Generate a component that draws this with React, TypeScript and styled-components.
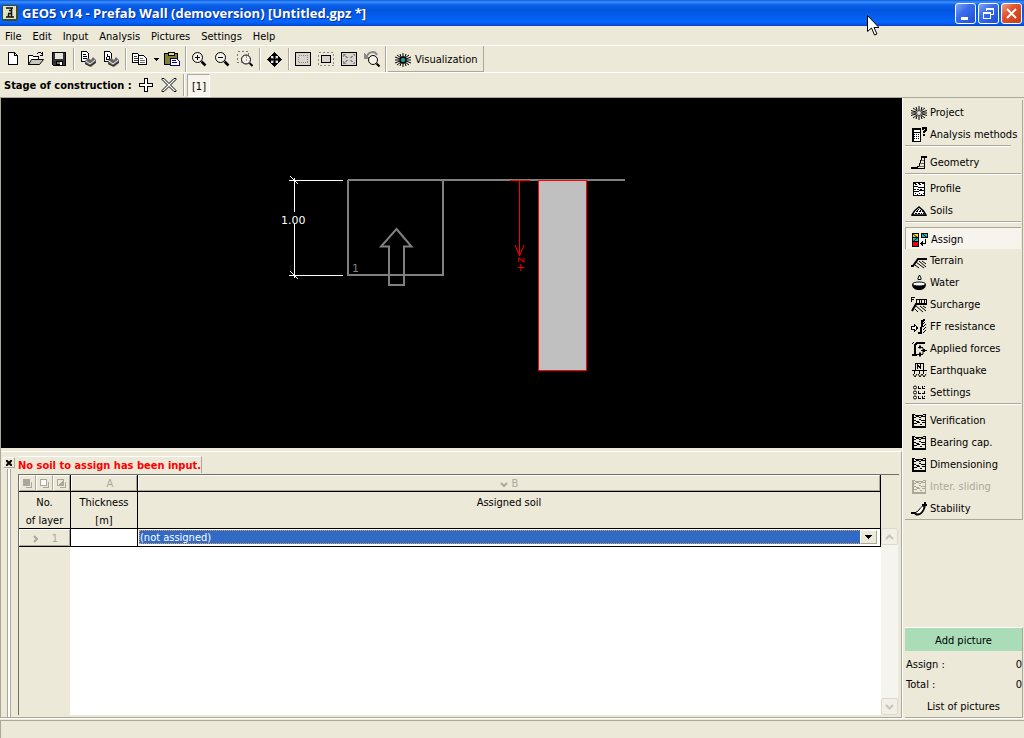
import React from "react";
import styled, { createGlobalStyle, css } from "styled-components";

const c = {
  face: "#ece9d8",
  light: "#ffffff",
  shade: "#aca899",
  dark: "#716f64",
  pressed: "#f6f4ec",
  disabled: "#aca899",
  select: "#316ac5",
};

const Global = createGlobalStyle`
  *, *::before, *::after { box-sizing: border-box; }
  body { margin: 0; background: ${c.face}; }
  body, button, input, select, table {
    font: 11px/16px "DejaVu Sans Condensed", "DejaVu Sans", sans-serif;
    color: #000;
  }
  button, input, select { margin: 0; padding: 0; border: 0; background: transparent; border-radius: 0; }
  svg { display: block; flex: none; }
`;

/* ---------- frame ---------- */

const Window = styled.div`
  min-height: 100vh;
  display: flex;
  flex-direction: column;
`;

const TitleBar = styled.header`
  position: relative;
  height: 26px;
  padding: 0 2px;
  display: flex;
  align-items: center;
  background: linear-gradient(#0a5be0 0, #3c90ff 2px, #0b5fe8 5px, #0355e0 10px, #0460f2 18px, #0666ff 22px, #0350d8 25px, #0340c0 26px);
`;

const Title = styled.h1`
  flex: 1;
  margin: 0 0 0 4px;
  font: bold 13px/24px "Open Sans", sans-serif;
  color: #fff;
  text-shadow: 1px 1px #0b2f8a;
  white-space: nowrap;
`;

const WindowButtons = styled.div`
  display: flex;
  gap: 2px;
`;

const WindowButton = styled.button<{ $close?: boolean }>`
  width: 21px;
  height: 21px;
  display: grid;
  place-items: center;
  border: 1px solid #fff;
  border-radius: 3px;
  background: ${(p) =>
    p.$close
      ? "linear-gradient(135deg, #f0a08a, #e0502c 40%, #c83c14)"
      : "linear-gradient(135deg, #7ea6f4, #3a6cec 40%, #1c4fd8)"};
`;

const Pointer = styled.svg`
  position: absolute;
  left: 85%;
  margin-left: -3px;
  top: 15px;
  z-index: 2;
`;

const MenuBar = styled.nav`
  height: 20px;
  display: flex;
  align-items: center;
  padding: 2px 0 0 5px;
  gap: 11px;
  border-bottom: 1px solid ${c.light};
`;

const MenuItem = styled.button`
  height: 18px;
`;

const Bar = styled.div`
  display: flex;
  align-items: center;
  border-bottom: 1px solid ${c.light};
`;

const ToolBar = styled(Bar)`
  height: 27px;
  padding-left: 2px;
`;

const StageBar = styled(Bar)`
  height: 25px;
  padding-left: 4px;
  border-bottom-color: ${c.shade};
`;

const ToolButton = styled.button<{ $slim?: boolean }>`
  width: ${(p) => (p.$slim ? 9 : 23)}px;
  height: 24px;
  padding-right: 1px;
  display: grid;
  place-items: center;
`;

const Divider = styled.span<{ $tight?: boolean }>`
  width: 2px;
  height: ${(p) => (p.$tight ? 26 : 22)}px;
  margin: 0 ${(p) => (p.$tight ? 1 : 2)}px;
  border-left: 1px solid ${c.shade};
  border-right: 1px solid ${c.light};
`;

const VisualButton = styled.button`
  display: flex;
  align-items: center;
  gap: 4px;
  height: 26px;
  padding: 2px 6px 0 7px;
  border-right: 1px solid ${c.shade};
  border-bottom: 1px solid ${c.shade};
`;

const StageLabel = styled.span`
  width: 131px;
  padding-top: 1px;
  font-weight: bold;
  white-space: nowrap;
`;

const StageTab = styled.button`
  width: 23px;
  height: 23px;
  padding: 4px 0 0 1px;
  background: ${c.pressed};
  border: 1px solid ${c.light};
  border-left-color: ${c.shade};
  border-top-color: ${c.shade};
`;

const Body = styled.div`
  flex: 1;
  display: grid;
  grid-template-columns: 1fr 122px;
`;

const Work = styled.main`
  display: flex;
  flex-direction: column;
  min-width: 0;
  border-left: 1px solid ${c.shade};
`;

const Canvas = styled.section`
  background: #000;
  svg { width: 100%; height: 350px; }
  text { font-family: "DejaVu Sans", sans-serif; }
`;

/* ---------- input pane ---------- */

const Pane = styled.section`
  flex: 1;
  display: flex;
  margin-top: 3px;
  padding-top: 4px;
  border-top: 1px solid ${c.light};
  border-right: 1px solid ${c.shade};
  border-bottom: 1px solid ${c.shade};
`;

const Grip = styled.div`
  width: 17px;
  display: flex;
  flex-direction: column;
  align-items: center;
  gap: 1px;
  padding: 1px 1px 0 0;
`;

const PaneClose = styled.button`
  width: 12px;
  height: 11px;
  display: grid;
  place-items: center;
  border: 1px solid;
  border-color: ${c.light} ${c.shade} ${c.shade} ${c.light};
`;

const GripLines = styled.span`
  flex: 1;
  width: 4px;
  border-left: 1px solid ${c.shade};
  border-right: 1px solid ${c.shade};
  background: ${c.light};
`;

const PaneMain = styled.div`
  flex: 1;
  min-width: 0;
  display: flex;
  flex-direction: column;
  padding: 0 2px 2px 0;
`;

const Warning = styled.p`
  align-self: flex-start;
  height: 17px;
  margin: 0 0 1px;
  font-weight: bold;
  line-height: 18px;
  color: #f00;
  border-top: 1px solid ${c.light};
  border-right: 1px solid ${c.shade};
`;

const Sheet = styled.div`
  flex: 1;
  display: grid;
  grid-template-columns: 1fr 18px;
  border-top: 1px solid ${c.dark};
  border-left: 1px solid ${c.dark};
`;

const SheetBody = styled.div`
  display: flex;
  flex-direction: column;
`;

const Table = styled.table`
  width: 100%;
  table-layout: fixed;
  border-collapse: separate;
  border-spacing: 0;
  th, td {
    padding: 0;
    font-weight: normal;
    text-align: center;
    border-right: 1px solid #000;
    border-bottom: 1px solid #000;
  }
  td { background: #fff; }
`;

const raised = css`
  border: 1px solid;
  border-color: ${c.light} ${c.shade} ${c.shade} ${c.light};
`;

const ColumnHead = styled.button<{ $plain?: boolean }>`
  ${raised}
  width: 100%;
  height: 16px;
  display: flex;
  align-items: center;
  justify-content: center;
  gap: 4px;
  padding-top: 2px;
  padding-left: ${(p) => (p.$plain ? 12 : 0)}px;
  color: ${c.disabled};
`;

const CornerTools = styled.div`
  display: flex;
  height: 16px;
`;

const CornerButton = styled.button`
  ${raised}
  flex: 1;
  display: grid;
  place-items: center;
`;

const Caption = styled.div`
  height: 36px;
  line-height: 18px;
  padding-top: 2px;
`;

const RowHead = styled(ColumnHead)`
  height: 17px;
  justify-content: flex-end;
  gap: 14px;
  padding-right: 11px;
`;

const CellInput = styled.input`
  display: block;
  width: 100%;
  height: 17px;
`;

const SelectWrap = styled.div`
  display: flex;
  height: 17px;
  padding: 1px 3px 2px 1px;
  position: relative;
`;

const SoilSelect = styled.select`
  appearance: none;
  flex: 1;
  padding: 1px 0 0 1px;
  line-height: 14px;
  color: #fff;
  background: ${c.select};
  outline: 1px dotted #e0a050;
  outline-offset: -1px;
`;

const DropArrow = styled.span`
  position: absolute;
  right: 3px;
  top: 1px;
  width: 17px;
  height: 14px;
  display: grid;
  place-items: center;
  pointer-events: none;
  background: ${c.face};
  ${raised}
`;

const Blank = styled.div`
  flex: 1;
  border-left: 51px solid ${c.face};
  background: #fff;
`;

const ScrollBar = styled.div`
  margin: 53px 1px 0 0;
  display: flex;
  flex-direction: column;
  justify-content: space-between;
  background: #f5f4ee;
`;

const ScrollButton = styled.button`
  height: 17px;
  display: grid;
  place-items: center;
  background: #f1efe6;
  border: 1px solid #dcd9cb;
  border-radius: 2px;
`;

/* ---------- side panel ---------- */

const Side = styled.aside`
  display: flex;
  flex-direction: column;
  justify-content: space-between;
  padding: 2px 1px 0 2px;
  border-left: 1px solid ${c.light};
`;

const Modes = styled.nav`
  border-right: 1px solid ${c.shade};
  border-bottom: 1px solid ${c.shade};
  padding: 1px 1px 0 0;
`;

const ModeButton = styled.button<{ $on?: boolean }>`
  width: 100%;
  height: 22px;
  padding: 2px 0 0 6px;
  display: flex;
  align-items: center;
  gap: 3px;
  white-space: nowrap;
  &:disabled { color: ${c.disabled}; }
  ${(p) =>
    p.$on &&
    css`
      background: ${c.pressed};
      border-top: 1px solid ${c.shade};
      border-left: 1px solid ${c.shade};
    `}
`;

const Rule = styled.hr<{ $short?: boolean; $tight?: boolean }>`
  height: 2px;
  margin: 0 ${(p) => (p.$short ? 10 : 0)}px ${(p) => (p.$tight ? 2 : 4)}px 0;
  border: 0;
  border-top: 1px solid ${c.shade};
  border-bottom: 1px solid ${c.light};
`;

const Pictures = styled.section`
  border-top: 1px solid ${c.light};
  border-right: 1px solid ${c.shade};
  border-bottom: 1px solid ${c.shade};
  display: flex;
  flex-direction: column;
`;

const AddPicture = styled.button`
  height: 23px;
  padding-top: 2px;
  background: #aaddb7;
`;

const Counts = styled.dl`
  margin: 4px 0 2px;
  div { display: flex; justify-content: space-between; padding: 0 0 0 1px; }
  dt, dd { margin: 0; line-height: 20px; }
`;

const ListButton = styled.button`
  height: 20px;
`;

const Status = styled.footer`
  height: 20px;
  border-top: 1px solid ${c.light};
  &::before {
    content: "";
    display: block;
    height: 18px;
    margin-top: 1px;
    border-top: 1px solid ${c.shade};
    border-left: 1px solid ${c.shade};
  }
`;

/* ---------- drawings ---------- */

type IconProps = { children: React.ReactNode; color?: string; w?: number; h?: number };

const Icon = ({ children, color = "#000", w = 16, h = 16 }: IconProps) => (
  <svg width={w} height={h} viewBox={`0 0 ${w} ${h}`} fill="none" stroke={color} shapeRendering="crispEdges" aria-hidden="true">
    {children}
  </svg>
);

const Magnifier = ({ children }: { children?: React.ReactNode }) => (
  <Icon>
    <circle cx="6.500" cy="6.500" r="5" shapeRendering="auto" fill="#f4f2e8" />
    <path d="M10.500 10.500l4 4" strokeWidth="2.500" shapeRendering="auto" />
    {children}
  </Icon>
);

const Printer = ({ preview }: { preview?: boolean }) => (
  <Icon>
    <path d="M1.500 .5h5l2 2v8h-7z" fill="#fff" />
    {preview ? <path d="M4.500 3v2h2v3h-3v-2" /> : <path d="M3 3.500h3M3 5.500h4M3 7.500h4" />}
    <path d="M5 10l3-3 3 2 2-3 3 3v3l-5 4-6-3z" fill="#666" stroke="none" shapeRendering="auto" />
    <path d="M6 10l4 3 5-4" stroke="#eee" shapeRendering="auto" />
    <path d="M5 12.500l5 2.500 6-4" stroke="#222" shapeRendering="auto" />
  </Icon>
);

const tool = {
  fresh: (
    <Icon>
      <path d="M3.500 1.500h6l3 3v9h-9z" fill="#fff" />
      <path d="M9.500 1.500v3h3" />
    </Icon>
  ),
  open: (
    <Icon>
      <path d="M.5 13.500v-9h4l1 1h5v3" fill="#fff" />
      <path d="M.5 13.500l3-5h12l-4 5z" fill="#c8c6bc" shapeRendering="auto" />
      <path d="M9 2.500h1M10 1.500h3M13 2.500h1M14.500 1v4M12 4.500h3" />
    </Icon>
  ),
  save: (
    <Icon>
      <path d="M1.500 1.500h13v13h-12l-1-1z" fill="#333" />
      <path d="M4 2h8v6H4z" fill="#e8e6dc" stroke="none" />
      <path d="M5 10.500h6v3H5z" fill="#777" stroke="#000" />
      <path d="M9 11h2v3H9z" fill="#fff" stroke="none" />
    </Icon>
  ),
  copy: (
    <Icon>
      <path d="M.5 2.500h5l2 2v7h-7z" fill="#fff" />
      <path d="M2 5.500h3M2 7.500h4M2 9.500h4" stroke="#444" />
      <path d="M6.500 4.500h5l3 3v6h-8z" fill="#fff" />
      <path d="M8 7.500h3M8 9.500h5M8 11.500h5" stroke="#666" />
    </Icon>
  ),
  drop: (
    <Icon w={5} h={3}>
      <path d="M0 0h5L2.500 3z" fill="#000" stroke="none" />
    </Icon>
  ),
  paste: (
    <Icon>
      <path d="M.5 2.500h13v11H.5z" fill="#808032" />
      <path d="M4 1.500h6v3H4z" fill="#e4dc60" />
      <path d="M6.500 7.500h6l3 3v4h-9z" fill="#fff" stroke="#00007c" />
      <path d="M8 9.500h4M8 11.500h5" stroke="#00007c" />
    </Icon>
  ),
  zoomIn: (
    <Magnifier>
      <path d="M4 6.500h5M6.500 4v5" />
    </Magnifier>
  ),
  zoomOut: (
    <Magnifier>
      <path d="M4 6.500h5" />
    </Magnifier>
  ),
  zoomArea: (
    <Icon>
      <path d="M.5 .5h11v11H.5z" stroke="#777" strokeDasharray="2 2" />
      <circle cx="9" cy="8.500" r="4.500" shapeRendering="auto" fill="#f4f2e8" />
      <path d="M9.500 5v6" stroke="#999" strokeDasharray="2 1" />
      <path d="M12.500 12l3 3" strokeWidth="2" shapeRendering="auto" />
    </Icon>
  ),
  move: (
    <Icon w={15} h={15}>
      <path d="M1 7.500h13M7.500 1v13" strokeWidth="1" />
      <path d="M7.500 0l3.500 4H4zM7.500 15l3.500-4H4zM0 7.500l4-3.500v7zM15 7.500l-4-3.500v7z" fill="#000" stroke="none" />
      <path d="M6.500 4v2.500H4M8.500 4v2.500H11M6.500 11V8.500H4M8.500 11V8.500H11" stroke="#555" />
    </Icon>
  ),
  frameAll: (
    <Icon>
      <path d="M.5 1.500h15v13H.5z" fill="#d8d6cc" />
      <path d="M3.500 4.500h9v7h-9z" stroke="#888" strokeDasharray="1 1" />
    </Icon>
  ),
  frameIn: (
    <Icon>
      <path d="M.5 1.500h15v13H.5z" stroke="#888" strokeDasharray="2 2" />
      <path d="M3.500 4.500h9v7h-9z" fill="#d8d6cc" />
    </Icon>
  ),
  frameFit: (
    <Icon>
      <path d="M.5 1.500h15v13H.5z" fill="#d8d6cc" />
      <path d="M2 6V3h3zM11 3h3v3zM14 10v3h-3zM5 13H2v-3z" fill="#888" stroke="none" />
      <path d="M4 5l3 2M12 5l-3 2M4 11l3-2M12 11l-3-2" stroke="#888" />
    </Icon>
  ),
  zoomBack: (
    <Icon>
      <path d="M3 5c2-5 8-5 10-1" stroke="#888" strokeWidth="2" shapeRendering="auto" />
      <path d="M0 2v6h6z" fill="#888" stroke="none" />
      <circle cx="9" cy="9" r="4.500" shapeRendering="auto" fill="#f4f2e8" />
      <path d="M12.500 12.500l3 3" strokeWidth="2" shapeRendering="auto" />
    </Icon>
  ),
  visual: (
    <Icon>
      <path d="M8 1v4M8 11v4M2 3l4 3M10 10l4 3M2 13l4-3M10 6l4-3M0 5l5 2M11 9l5 2M0 11l5-2M11 7l5-2M0 8h4M12 8h4M5 2l1 3M11 2l-1 3M5 14l1-3M11 14l-1-3" shapeRendering="auto" />
      <circle cx="8" cy="8" r="3" fill="#159a94" strokeWidth="1.500" shapeRendering="auto" />
    </Icon>
  ),
};

const Chart = ({ color }: { color?: string }) => (
  <Icon color={color}>
    <path d="M2 1v14M1 14h14" strokeWidth="2" />
    <path d="M14.500 1v13M3 4.500h2M5 3.500h3M8 4.500h2M10 3.500h4M3 7.500h2M5 8.500h3M8 6.500h2M10 7.500h4M3 10.500h3M6 9.500h3M9 11.500h2M11 9.500h3M1 1.500h3M4 2.500h8M12 1.500h3" />
  </Icon>
);

const mode = {
  project: (
    <Icon>
      <path d="M8 1v4M8 11v4M2 3l4 3M10 10l4 3M2 13l4-3M10 6l4-3M0 5.500l5 1.500M11 9l5 1.500M0 10.500L5 9M11 7l5-1.500M0 8h5M11 8h5M5 2l1 3M11 2l-1 3M5 14l1-3M11 14l-1-3" shapeRendering="auto" />
      <circle cx="8" cy="8" r="2.500" fill="#e8e6dc" stroke="#333" shapeRendering="auto" />
    </Icon>
  ),
  methods: (
    <Icon>
      <path d="M1.500 1.500h8v13h-8z" fill="#fff" />
      <path d="M1 2h9" strokeWidth="2" />
      <path d="M1 5.500h9M3 7.500h1M5 7.500h1M7 7.500h1M3 9.500h1M5 9.500h1M7 9.500h1M3 11.500h1M5 11.500h1M7 11.500h1M2.500 2v12" />
      <path d="M12 3V1h3v2l-2 2v1M13 7v2" strokeWidth="2" />
    </Icon>
  ),
  geometry: (
    <Icon>
      <path d="M0 13h6" strokeWidth="2" />
      <path d="M15 1.500h-4.500v4h-1v3h-1v3H6v2h7.500v-12" />
      <path d="M10 5.500h3M9 8.500h4M8 11.500h5" stroke="#666" />
      <path d="M11 2h5" strokeWidth="2" />
    </Icon>
  ),
  profile: (
    <Icon>
      <path d="M2.500 1.500h11v13h-11z" fill="#fff" />
      <path d="M3 2.500h2M7 2.500h2M11 2.500h2M4 3.500h2M8 3.500h2M3 5.500h4M7 6.500h6M3 8.500h2M6 8.500h2M9 8.500h2M3 10.500h5M8 9.500h5M4 12.500h1M6 13.500h1M8 12.500h1M10 13.500h1M12 12.500h1" />
    </Icon>
  ),
  soils: (
    <Icon>
      <path d="M1 12L3.500 8 8 4l4.500 4L15 12z" fill="#fff" shapeRendering="auto" strokeWidth="1.500" />
      <path d="M1 12.500h14M7 6.500h1M5 8.500h2M8 8.500h2M11 8.500h1M4 10.500h2M7 10.500h2M10 10.500h1M12 10.500h1M6 7.500h1M9 7.500h1" />
    </Icon>
  ),
  assign: (
    <Icon>
      <path d="M.5 1.500h6v13h-6zM9.500 1.500h6v4h-6z" fill="#fff" />
      <path d="M1 2h5v4H1z" fill="#ffe800" stroke="none" />
      <path d="M1 6h5v4H1zM10 2h5v3h-5z" fill="#18c8d0" stroke="none" />
      <path d="M1 10h5v4H1z" fill="#f00000" stroke="none" />
      <path d="M1 5.500h5M1 9.500h5" />
      <path d="M1.500 2.500l4 3M1.500 9l4-3M10.500 2l4 3" shapeRendering="auto" />
      <path d="M13.500 7v4.500H9" />
      <path d="M8 11.500l3-3v6z" fill="#000" stroke="none" />
    </Icon>
  ),
  terrain: (
    <Icon>
      <path d="M0 13h2l5-7h9" strokeWidth="2" shapeRendering="auto" />
      <path d="M4 12l4 3M5 9l8 6M8 8l7 6M11 8l4 3" shapeRendering="auto" />
    </Icon>
  ),
  water: (
    <Icon>
      <path d="M8.500 0l1.500 3v1.500H7V3z" fill="#fff" shapeRendering="auto" />
      <path d="M1 9h14c0 4-3 6-7 6s-7-2-7-6z" fill="#000" stroke="none" shapeRendering="auto" />
      <ellipse cx="8" cy="9" rx="6.500" ry="2" fill="#fff" shapeRendering="auto" />
    </Icon>
  ),
  surcharge: (
    <Icon>
      <path d="M.5 0v5M0 .5h4M0 2.500h3M5.500 6V2.500h10V7M8.500 2v5M10.500 2v5M13.500 2v5" />
      <path d="M1 14l4-7h11" strokeWidth="2" shapeRendering="auto" />
      <path d="M4 12l3 3M5 9l7 6M9 9l6 5M12 9l3 2" shapeRendering="auto" />
    </Icon>
  ),
  resistance: (
    <Icon>
      <path d="M.5 7.500h3v-2l3 3.500-3 3.500v-2h-3z" fill="#fff" />
      <path d="M14 1l-3 1-1 12H7" strokeWidth="2" />
      <path d="M12 5l2-2M12 8l3-3M12 11l3-3M12 14l3-3" shapeRendering="auto" />
    </Icon>
  ),
  forces: (
    <Icon>
      <path d="M14 2H6L4 4v9M1 14h5" strokeWidth="2" />
      <path d="M1 3l2-2M9 4v4M7 6.500h5M12 7v6M10 9.500h6M9 11v5M6 13.500h6" shapeRendering="auto" />
      <path d="M12 8h2v3h-2zM8 5h2v2H8zM8 12h2v3H8z" fill="#000" stroke="none" />
    </Icon>
  ),
  quake: (
    <Icon>
      <path d="M4.500 0v7M12.500 0v7M4 .5h9M6 1l4 5M6.500 1v5M9.500 1v5M1 7.500h15M3.500 8v3M12.500 8v3M8.500 8v3" />
      <path d="M2 11l2 3 2-3M7 11l2 3 2-3M11 11l2 3 2-3" shapeRendering="auto" />
    </Icon>
  ),
  settings: (
    <Icon>
      <g shapeRendering="auto">
        <circle cx="4" cy="2.500" r="1.500" fill="#fff" />
        <circle cx="4" cy="7.500" r="1.500" fill="#fff" />
        <circle cx="4" cy="12.500" r="1.500" fill="#fff" />
      </g>
      <path d="M7 3.500h3M11 3.500h3M7.500 1v3M11.500 1v3M7 8.500h3M11 8.500h3M7.500 6v3M13.500 6v3M7 13.500h3M11 13.500h3M7.500 11v3M11.500 11v3M13 1.500h1M13 11.500h1" />
    </Icon>
  ),
  chart: <Chart />,
  chartOff: <Chart color={c.disabled} />,
  stability: (
    <Icon>
      <path d="M0 12h5M11 4h5M14 1v4" strokeWidth="2" />
      <path d="M5 11c3 0 4-6 8-6 0 4-3 8-6 8-2 0-3-1-2-2z" fill="#fff" shapeRendering="auto" />
      <path d="M4 13c5 3 9-3 10-8" strokeWidth="1.500" shapeRendering="auto" />
    </Icon>
  ),
};

const WallDrawing = () => (
  <svg viewBox="1 0 901 350" preserveAspectRatio="xMidYMin meet" fill="none" shapeRendering="crispEdges" role="img" aria-label="Prefab wall section">
    <g stroke="#808080" strokeWidth="2">
      <path d="M348 82h277M348 82v95h95V82" />
      <path d="M396.500 131l15 17.500H404V187h-15V148.500h-8z" shapeRendering="auto" />
    </g>
    <text x="352" y="174" fill="#808080">1</text>
    <g stroke="#fff">
      <path d="M289 82.500h54M289 177.500h54M294.500 80v34M294.500 126v54" />
      <path d="M290 78l8 8M290 173l8 8" shapeRendering="auto" />
    </g>
    <text x="281" y="126" fill="#fff">1.00</text>
    <path d="M538.500 82.500h48v190h-48z" fill="#c0c0c0" stroke="#f00" />
    <path d="M510 82.500h20M519.500 82v74" stroke="#f00" />
    <path d="M515 147l4.500 11 4.500-11" stroke="#f00" shapeRendering="auto" />
    <text transform="translate(524 174) rotate(-90)" fill="#f00">+z</text>
  </svg>
);

/* ---------- data ---------- */

const menus = ["File", "Edit", "Input", "Analysis", "Pictures", "Settings", "Help"];

type Mode = { label: string; icon: React.ReactNode; on?: boolean; off?: boolean };

const groups: Mode[][] = [
  [
    { label: "Project", icon: mode.project },
    { label: "Analysis methods", icon: mode.methods },
  ],
  [{ label: "Geometry", icon: mode.geometry }],
  [
    { label: "Profile", icon: mode.profile },
    { label: "Soils", icon: mode.soils },
  ],
  [
    { label: "Assign", icon: mode.assign, on: true },
    { label: "Terrain", icon: mode.terrain },
    { label: "Water", icon: mode.water },
    { label: "Surcharge", icon: mode.surcharge },
    { label: "FF resistance", icon: mode.resistance },
    { label: "Applied forces", icon: mode.forces },
    { label: "Earthquake", icon: mode.quake },
    { label: "Settings", icon: mode.settings },
  ],
  [
    { label: "Verification", icon: mode.chart },
    { label: "Bearing cap.", icon: mode.chart },
    { label: "Dimensioning", icon: mode.chart },
    { label: "Inter. sliding", icon: mode.chartOff, off: true },
    { label: "Stability", icon: mode.stability },
  ],
];

const Tool = ({ name, label }: { name: keyof typeof tool; label: string }) => (
  <ToolButton aria-label={label} $slim={name === "drop"}>
    {tool[name]}
  </ToolButton>
);

export default function App() {
  return (
    <Window>
      <Global />
      <TitleBar>
        <svg width="16" height="16" viewBox="0 0 16 16" aria-hidden="true">
          <rect x="0" y="0" width="16" height="16" rx="2" fill="#3d4a2c" />
          <rect x="1" y="1" width="13" height="13" fill="#dfe3c4" />
          <path d="M4 3h7M9.500 3v9M7 5.500h3M6 8.500h4M4 12h8M6.500 9v3" stroke="#111" strokeWidth="1.500" fill="none" />
        </svg>
        <Title>GEO5 v14 - Prefab Wall (demoversion) [Untitled.gpz *]</Title>
        <WindowButtons>
          <WindowButton aria-label="Minimize">
            <Icon color="#fff" w={15} h={15}><path d="M3 12h7" strokeWidth="3" /></Icon>
          </WindowButton>
          <WindowButton aria-label="Restore">
            <Icon color="#fff" w={15} h={15}>
              <path d="M5.500 5V2.500h7v6H10M5 3h8M2.500 6.500h7v6h-7zM2 7h8" />
            </Icon>
          </WindowButton>
          <WindowButton aria-label="Close" $close>
            <Icon color="#fff" w={15} h={15}>
              <path d="M3 3l9 9M12 3l-9 9" strokeWidth="2" shapeRendering="auto" />
            </Icon>
          </WindowButton>
        </WindowButtons>
        <Pointer width="12" height="21" viewBox="0 0 12 21" aria-hidden="true">
          <path d="M.5 .5v16l4-3.500 3 7 2.500-1-3-6.500h5z" fill="#fff" stroke="#000" />
        </Pointer>
      </TitleBar>

      <MenuBar>
        {menus.map((m) => (
          <MenuItem key={m}>{m}</MenuItem>
        ))}
      </MenuBar>

      <ToolBar>
        <Tool name="fresh" label="New" />
        <Tool name="open" label="Open" />
        <Tool name="save" label="Save" />
        <Divider />
        <ToolButton aria-label="Print"><Printer /></ToolButton>
        <ToolButton aria-label="Print preview"><Printer preview /></ToolButton>
        <Divider />
        <Tool name="copy" label="Copy" />
        <Tool name="drop" label="Copy options" />
        <Tool name="paste" label="Paste" />
        <Divider $tight />
        <Tool name="zoomIn" label="Zoom in" />
        <Tool name="zoomOut" label="Zoom out" />
        <Tool name="zoomArea" label="Zoom area" />
        <Divider />
        <Tool name="move" label="Move" />
        <Divider />
        <Tool name="frameAll" label="Show all" />
        <Tool name="frameIn" label="Show structure" />
        <Tool name="frameFit" label="Fit" />
        <Tool name="zoomBack" label="Previous zoom" />
        <Divider $tight />
        <VisualButton>
          {tool.visual}
          Visualization
        </VisualButton>
      </ToolBar>

      <StageBar>
        <StageLabel>Stage of construction :</StageLabel>
        <ToolButton aria-label="Add stage">
          <Icon><path d="M6.500 1.500h3v5h5v3h-5v5h-3v-5h-5v-3h5z" fill="#fff" /></Icon>
        </ToolButton>
        <ToolButton aria-label="Remove stage">
          <Icon>
            <path d="M1 1.500h2l5 5 5-5h2v1L9.500 8l5.500 5.500v1h-2l-5-5-5 5H1v-1L6.500 8 1 2.500z" fill="#fff" shapeRendering="auto" />
          </Icon>
        </ToolButton>
        <Divider />
        <StageTab>[1]</StageTab>
      </StageBar>

      <Body>
        <Work>
          <Canvas><WallDrawing /></Canvas>
          <Pane>
            <Grip>
              <PaneClose aria-label="Close panel">
                <Icon w={6} h={6}><path d="M0 0l6 6M6 0L0 6" strokeWidth="2" shapeRendering="auto" /></Icon>
              </PaneClose>
              <GripLines />
            </Grip>
            <PaneMain>
              <Warning>No soil to assign has been input.</Warning>
              <Sheet>
                <SheetBody>
                  <Table>
                    <colgroup>
                      <col style={{ width: 52 }} />
                      <col style={{ width: 67 }} />
                      <col />
                    </colgroup>
                    <thead>
                      <tr>
                        <th>
                          <CornerTools>
                            <CornerButton aria-label="Select all">
                              <Icon w={9} h={9} color={c.shade}><path d="M3 8.500h5.500V3" /><path d="M0 0h7v7H0z" fill={c.shade} stroke="none" /></Icon>
                            </CornerButton>
                            <CornerButton aria-label="Select none">
                              <Icon w={9} h={9} color={c.shade}><path d="M3 8.500h5.500V3" /><path d="M.5 .5h6v6h-6z" fill="#fff" /></Icon>
                            </CornerButton>
                            <CornerButton aria-label="Invert selection">
                              <Icon w={9} h={9} color={c.shade}><path d="M3 8.500h5.500V3M.5 .5h6v6h-6z" /><path d="M7 0v7H0z" fill={c.shade} stroke="none" /></Icon>
                            </CornerButton>
                          </CornerTools>
                        </th>
                        <th><ColumnHead $plain>A</ColumnHead></th>
                        <th>
                          <ColumnHead>
                            <Icon w={8} h={5} color={c.shade}><path d="M1 1l3 3 3-3" strokeWidth="2" shapeRendering="auto" /></Icon>
                            B
                          </ColumnHead>
                        </th>
                      </tr>
                      <tr>
                        <th scope="col"><Caption>No.<br />of layer</Caption></th>
                        <th scope="col"><Caption>Thickness<br />[m]</Caption></th>
                        <th scope="col"><Caption>Assigned soil</Caption></th>
                      </tr>
                    </thead>
                    <tbody>
                      <tr>
                        <th scope="row">
                          <RowHead>
                            <Icon w={5} h={8} color={c.shade}><path d="M1 1l3 3-3 3" strokeWidth="2" shapeRendering="auto" /></Icon>
                            1
                          </RowHead>
                        </th>
                        <td><CellInput aria-label="Thickness [m]" /></td>
                        <td>
                          <SelectWrap>
                            <SoilSelect aria-label="Assigned soil">
                              <option>(not assigned)</option>
                            </SoilSelect>
                            <DropArrow>
                              <Icon w={7} h={4}><path d="M0 0h7L3.500 4z" fill="#000" stroke="none" /></Icon>
                            </DropArrow>
                          </SelectWrap>
                        </td>
                      </tr>
                    </tbody>
                  </Table>
                  <Blank />
                </SheetBody>
                <ScrollBar>
                  <ScrollButton aria-label="Scroll up">
                    <Icon w={9} h={6} color="#c8c5b6"><path d="M1 5l3.500-3.500L8 5" strokeWidth="2" shapeRendering="auto" /></Icon>
                  </ScrollButton>
                  <ScrollButton aria-label="Scroll down">
                    <Icon w={9} h={6} color="#c8c5b6"><path d="M1 1l3.500 3.500L8 1" strokeWidth="2" shapeRendering="auto" /></Icon>
                  </ScrollButton>
                </ScrollBar>
              </Sheet>
            </PaneMain>
          </Pane>
        </Work>

        <Side>
          <Modes>
            {groups.map((group, i) => (
              <React.Fragment key={i}>
                {i > 0 && <Rule $short={i === 1} $tight={i === 2} />}
                {group.map((m) => (
                  <ModeButton key={m.label} $on={m.on} disabled={m.off}>
                    {m.icon}
                    {m.label}
                  </ModeButton>
                ))}
              </React.Fragment>
            ))}
          </Modes>
          <Pictures>
            <AddPicture>Add picture</AddPicture>
            <Counts>
              <div><dt>Assign :</dt><dd>0</dd></div>
              <div><dt>Total :</dt><dd>0</dd></div>
            </Counts>
            <ListButton>List of pictures</ListButton>
          </Pictures>
        </Side>
      </Body>
      <Status />
    </Window>
  );
}
